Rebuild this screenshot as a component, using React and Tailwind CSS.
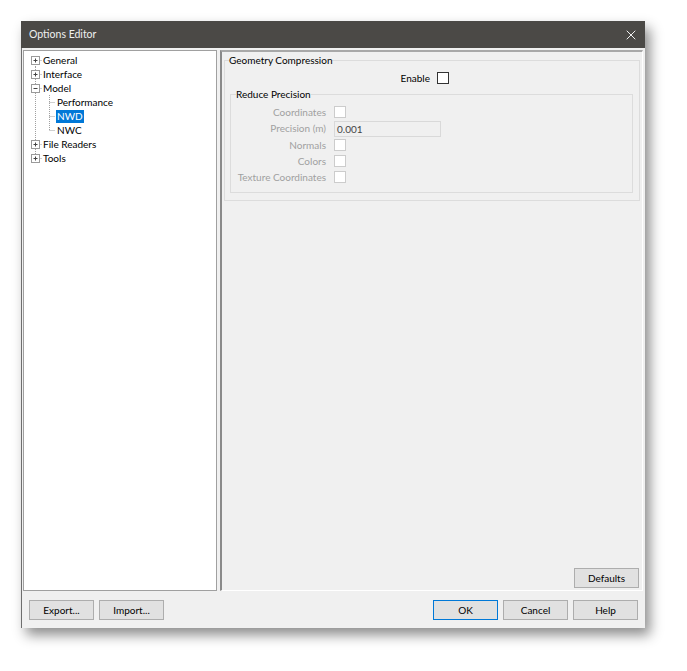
import React from "react";
import { X } from "lucide-react";

const font = { fontFamily: 'Lato, "Noto Sans", "Liberation Sans", sans-serif' };

const treeItems = [
  { label: "General", level: 0, sign: "plus" },
  { label: "Interface", level: 0, sign: "plus" },
  { label: "Model", level: 0, sign: "minus" },
  { label: "Performance", level: 1 },
  { label: "NWD", level: 1, selected: true },
  { label: "NWC", level: 1, lastChild: true },
  { label: "File Readers", level: 0, sign: "plus" },
  { label: "Tools", level: 0, sign: "plus", last: true },
];

// Connector lines + expander box for one tree row
const TreeGutter = ({ item, index }) => {
  const dot = { stroke: "#a0a0a0", strokeWidth: 1, strokeDasharray: "1 1" };
  const w = item.level === 0 ? 18 : 32;
  return (
    <svg width={w} height="14" className="shrink-0">
      {/* root vertical line */}
      <line x1="11.5" x2="11.5" y1={index === 0 ? 7 : 0} y2={item.last ? 7 : 14} style={dot} />
      {item.level === 0 && (
        <>
          <line x1="15.5" x2="18" y1="7.5" y2="7.5" style={dot} />
          <rect x="7.5" y="3.5" width="8" height="8" fill="#fff" stroke="#9a9a9a" />
          <line x1="9.5" x2="13.5" y1="7.5" y2="7.5" stroke="#444" />
          {item.sign === "plus" && <line x1="11.5" x2="11.5" y1="5.5" y2="9.5" stroke="#444" />}
        </>
      )}
      {item.level === 1 && (
        <>
          <line x1="25.5" x2="25.5" y1="0" y2={item.lastChild ? 7 : 14} style={dot} />
          <line x1="25.5" x2="31" y1="7.5" y2="7.5" style={dot} />
        </>
      )}
    </svg>
  );
};

const Checkbox = ({ disabled }) => (
  <div
    className={`w-[12px] h-[12px] border bg-white ${
      disabled ? "border-[#cccccc]" : "border-[#333333]"
    }`}
  />
);

const Button = ({ children, primary }) => (
  <button
    className={`w-[65px] h-[20px] bg-[#e1e1e1] border text-[10px] text-black leading-none ${
      primary ? "border-[#0078d7]" : "border-[#adadad]"
    }`}
  >
    {children}
  </button>
);

const rows = [
  { label: "Coordinates", h: "h-[16px]", control: <Checkbox disabled /> },
  {
    label: "Precision (m)",
    h: "h-[17px]",
    control: (
      <div className="w-[107px] h-[16px] border border-[#d9d9d9] bg-[#f0f0f0] text-[10px] text-[#444] pl-[2px] leading-[14px]">
        0.001
      </div>
    ),
  },
  { label: "Normals", h: "h-[16px]", control: <Checkbox disabled /> },
  { label: "Colors", h: "h-[16px]", control: <Checkbox disabled /> },
  { label: "Texture Coordinates", h: "h-[16px]", control: <Checkbox disabled /> },
];

export default function App() {
  return (
    <div className="min-h-screen bg-white pt-[21px] pl-[21px]" style={font}>
      <div className="w-[624px] h-[607px] flex flex-col shadow-[5px_7px_12px_rgba(0,0,0,0.45)]">
        {/* Title bar */}
        <div className="h-[27px] bg-[#4b4946] flex items-center justify-between pl-[8px] pr-[6px]">
          <span className="text-[10.5px] text-[#f0f0f0]">Options Editor</span>
          <X size={16} strokeWidth={1.5} className="text-[#f0f0f0]" />
        </div>

        {/* Body */}
        <div className="flex-1 bg-[#f0f0f0] border-l border-[#6e6e6e] flex flex-col">
          <div className="h-[543px] flex pt-[2px] pl-[1px] pr-[2px] gap-[3px]">
            {/* Tree */}
            <div className="w-[194px] border border-[#a0a0a0] bg-white pt-[2px]">
              {treeItems.map((item, i) => (
                <div key={item.label} className="h-[14px] flex items-center">
                  <TreeGutter item={item} index={i} />
                  <span
                    className={`text-[10px] leading-[13px] px-[1px] ${
                      item.selected ? "bg-[#0078d7] text-white" : "text-black"
                    }`}
                  >
                    {item.label}
                  </span>
                </div>
              ))}
            </div>

            {/* Right panel */}
            <div className="flex-1 border-l-2 border-t-2 border-r border-b border-l-[#8a8a8a] border-t-[#a8a8a8] border-r-white border-b-white flex flex-col">
              <fieldset className="mt-[1px] mx-[2px] border border-[#dcdcdc] pb-[7px]">
                <legend className="ml-[4px] text-[10px] leading-[14px] text-black">
                  Geometry Compression
                </legend>
                <div className="mt-[4px] h-[14px] flex items-center">
                  <span className="w-[205px] text-right text-[10px] text-black">Enable</span>
                  <div className="ml-[7px]">
                    <Checkbox />
                  </div>
                </div>
                <fieldset className="mt-[2px] ml-[5px] mr-[6px] border border-[#dcdcdc] pb-[7px]">
                  <legend className="ml-[5px] text-[10px] leading-[14px] text-black">
                    Reduce Precision
                  </legend>
                  <div className="mt-[3px]">
                    {rows.map((r) => (
                      <div key={r.label} className={`${r.h} flex items-center gap-[8px]`}>
                        <span className="w-[95px] text-right text-[10px] text-[#a0a0a0] whitespace-nowrap">
                          {r.label}
                        </span>
                        {r.control}
                      </div>
                    ))}
                  </div>
                </fieldset>
              </fieldset>

              <div className="mt-auto self-end mr-[3px] mb-[2px]">
                <Button>Defaults</Button>
              </div>
            </div>
          </div>

          {/* Footer buttons */}
          <div className="flex items-center justify-between pt-[9px] pl-[7px] pr-[7px]">
            <div className="flex gap-[5px]">
              <Button>Export...</Button>
              <Button>Import...</Button>
            </div>
            <div className="flex gap-[5px]">
              <Button primary>OK</Button>
              <Button>Cancel</Button>
              <Button>Help</Button>
            </div>
          </div>
        </div>
      </div>
    </div>
  );
}
